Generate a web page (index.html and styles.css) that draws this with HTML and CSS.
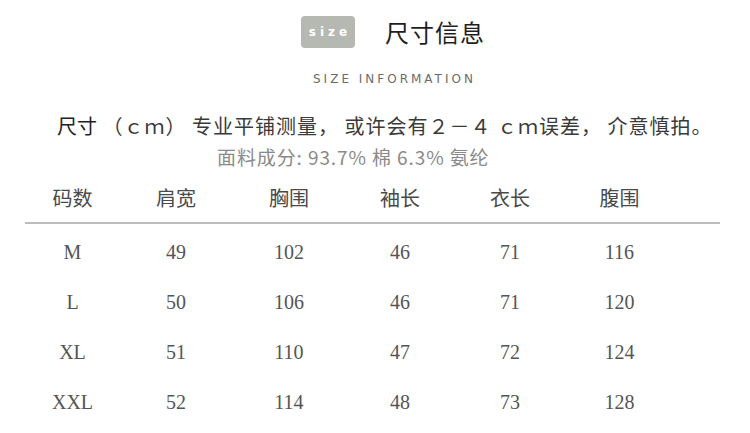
FILE: index.html
```html
<!DOCTYPE html>
<html lang="zh">
<head>
<meta charset="utf-8">
<link rel="stylesheet" href="styles.css">
</head>
<body>
<div class="page">
  <div class="title-row">
    <span class="badge">size</span>
    <h1 class="title">尺寸信息</h1>
  </div>
  <div class="subtitle">SIZE INFORMATION</div>
  <p class="note"><span class="note-key">尺寸</span> （ｃｍ） 专业平铺测量， 或许会有２－４ ｃｍ误差， 介意慎拍。</p>
  <p class="fabric">面料成分: 93.7% 棉 6.3% 氨纶</p>
  <div class="table">
    <div class="row head">
      <span>码数</span><span>肩宽</span><span>胸围</span><span>袖长</span><span>衣长</span><span>腹围</span>
    </div>
    <div class="row"><span>M</span><span>49</span><span>102</span><span>46</span><span>71</span><span>116</span></div>
    <div class="row"><span>L</span><span>50</span><span>106</span><span>46</span><span>71</span><span>120</span></div>
    <div class="row"><span>XL</span><span>51</span><span>110</span><span>47</span><span>72</span><span>124</span></div>
    <div class="row"><span>XXL</span><span>52</span><span>114</span><span>48</span><span>73</span><span>128</span></div>
  </div>
</div>
</body>
</html>
```
FILE: styles.css
```css
html, body {
  margin: 0;
  padding: 0;
  background: #fff;
}
.page {
  width: 750px;
  height: 433px;
  overflow: hidden;
  font-family: "Noto Sans CJK SC", "Noto Sans", sans-serif;
  color: #333;
}
.title-row {
  display: flex;
  align-items: center;
  padding: 16px 0 0 301px;
  gap: 30px;
}
.badge {
  width: 54px;
  height: 32px;
  border-radius: 4px;
  background: #b6b8b2;
  color: #fff;
  font-family: "DejaVu Sans", sans-serif;
  font-weight: 700;
  font-size: 12px;
  letter-spacing: 4px;
  display: flex;
  align-items: center;
  justify-content: center;
  padding-left: 4px;
  box-sizing: border-box;
}
.title {
  margin: 0;
  font-size: 24px;
  font-weight: 400;
  color: #1e1e1e;
  line-height: 32px;
  letter-spacing: 1px;
}
.subtitle {
  margin-top: 24px;
  padding-left: 313px;
  font-family: "DejaVu Sans", sans-serif;
  font-size: 12px;
  letter-spacing: 3px;
  color: #6b6b6b;
  line-height: 14px;
}
.note {
  margin: 26px 0 0 57px;
  font-size: 20px;
  line-height: 28px;
  color: #3a3a3a;
  font-family: "Noto Sans CJK SC", serif;
  letter-spacing: 1px;
  white-space: nowrap;
}
.note-key {
  color: #222;
  letter-spacing: 0;
}
.fabric {
  margin: 4px 0 0 217px;
  font-size: 19px;
  line-height: 26px;
  color: #8a8a8a;
  letter-spacing: 0.9px;
  white-space: nowrap;
}
.table {
  margin: 14px 30px 0 25px;
}
.row {
  display: grid;
  grid-template-columns: 95px 112px 114px 108px 112px 107px;
  height: 50px;
  align-items: center;
  justify-items: center;
  font-family: "Liberation Serif", serif;
  font-size: 20px;
  color: #555;
}
.row.head {
  height: 38px;
  border-bottom: 2px solid #bdbdbd;
  font-family: "Noto Sans CJK SC", sans-serif;
  font-size: 20px;
  line-height: 28px;
  color: #4a4a4a;
  align-items: start;
  margin-bottom: 3px;
}
```
